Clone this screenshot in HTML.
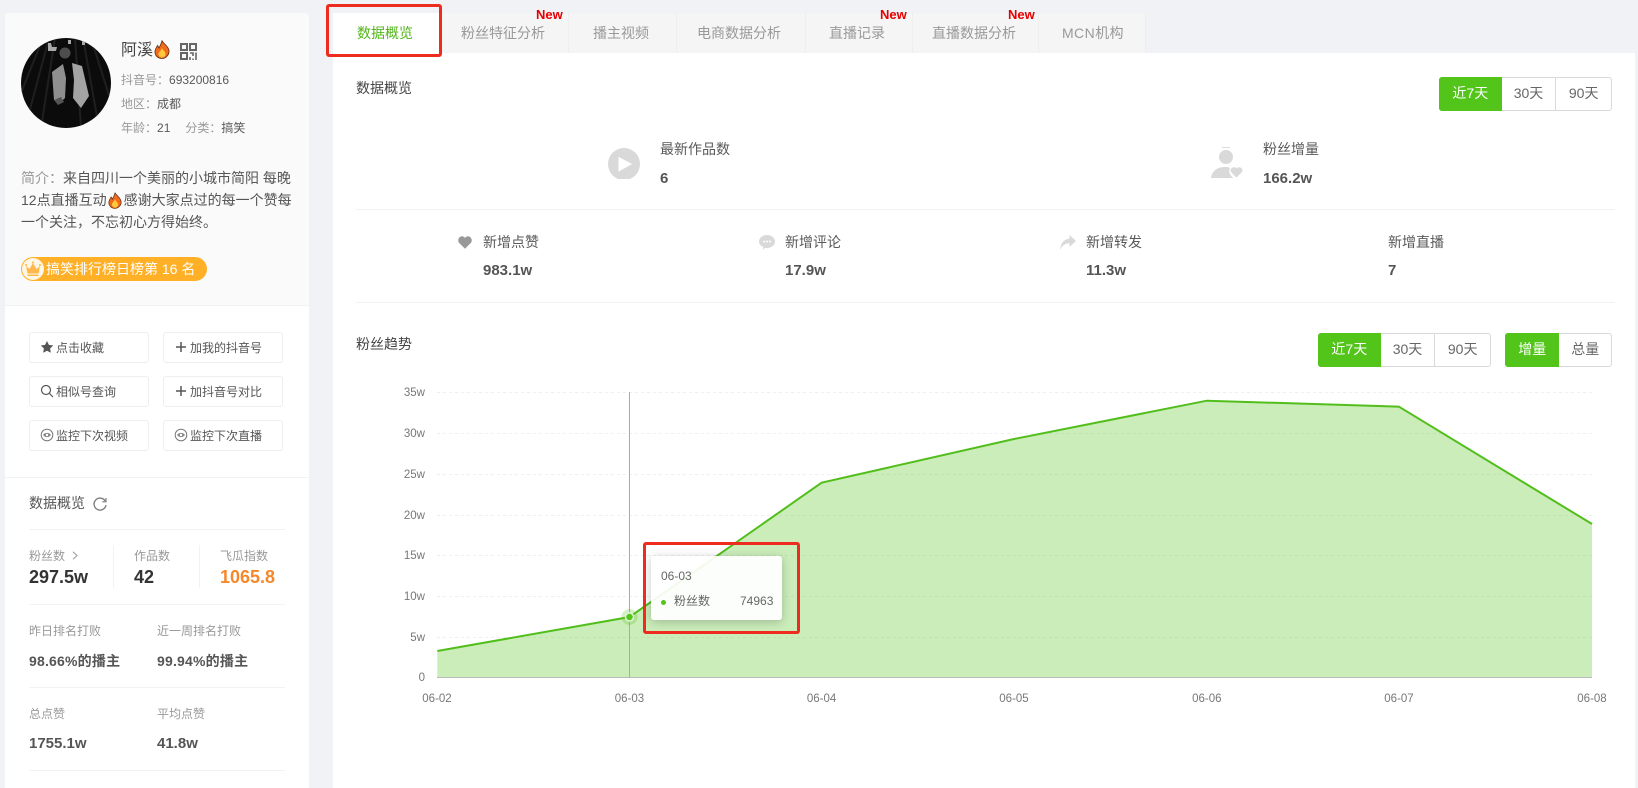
<!DOCTYPE html>
<html lang="zh-CN">
<head>
<meta charset="utf-8">
<title>数据概览</title>
<style>
*{box-sizing:border-box;margin:0;padding:0}
html,body{width:1638px;height:788px;overflow:hidden;background:#f0f2f5}
body{position:relative;font-family:"Liberation Sans","Noto Sans CJK SC",sans-serif;font-size:12px;color:#595959}
.a{position:absolute;white-space:nowrap;line-height:20px;height:20px}
.g{color:#999}.d{color:#444}
.t14{font-size:14px}
.b{font-weight:700}
.v{font-weight:700;font-size:15px;color:#555}
.line{position:absolute;height:1px;background:#f2f2f2}
.btn{position:absolute;width:120px;height:31px;background:#fff;border:1px solid #eee;border-radius:3px;font-size:12px;line-height:30px;color:#555;white-space:nowrap}
.btn svg{position:absolute;left:10px;top:7px}
.btn span{position:absolute;left:26px;top:0}
.tab{position:absolute;top:13px;height:40px;background:#f5f5f6;border-right:1px solid #eee}
.new{position:absolute;top:6px;font-weight:700;font-size:13px;color:#e60000;line-height:18px}
.grp{position:absolute;height:34px;display:flex;border:1px solid #d9d9d9;border-radius:3px;background:#fff;font-size:14px;line-height:31px;text-align:center;color:#666}
.grp div{border-left:1px solid #d9d9d9;height:32px}
.grp div.on{background:#52c41a;color:#fff;border-left:0;margin:-1px 0 -1px -1px;height:34px;line-height:33px;border-radius:3px 0 0 3px}
.grp div.on+div{border-left:0}
</style>
</head>
<body>

<!-- left card -->
<div style="position:absolute;left:5px;top:13px;width:304px;height:775px;background:#fff;border-radius:4px 4px 0 0"></div>
<div style="position:absolute;left:5px;top:13px;width:304px;height:293px;background:#fafafa;border-radius:4px 4px 0 0;border-bottom:1px solid #f2f2f2"></div>

<svg style="position:absolute;left:21px;top:38px" width="90" height="90" viewBox="0 0 90 90">
<defs><clipPath id="c"><circle cx="45" cy="45" r="45"/></clipPath></defs>
<g clip-path="url(#c)">
<rect width="90" height="90" fill="#0b0b0b"/>
<g fill="none" stroke="#1f1f1f" stroke-width="2">
<path d="M28 0L4 90M22 0L-6 70M34 0L20 90M62 0L78 90M70 0L92 70M54 0L60 90"/>
</g>
<path d="M27 5h3l1 4h5l-1 4h-8zM47 2h3v4h-3zM61 2h3v5h-3z" fill="#a8a8a8"/>
<circle cx="44" cy="15" r="5.500" fill="#4d4d4d"/>
<path d="M31 34l11-8 3 14-1 20-4 4-7-2z" fill="#8f8f8f"/>
<path d="M51 25l10 3 7 30-8 12-8-10 1-18z" fill="#a3a3a3"/>
<path d="M33 62l7-3 3 5-6 3z" fill="#555"/>
</g>
</svg>

<div class="a d" style="left:121px;top:41px;font-size:16px">阿溪</div>
<svg style="position:absolute;left:154px;top:40px" width="16" height="19" viewBox="0 0 16 19">
<path d="M8 .5c1 3 6 5 7 10 .5 4-3 8-7 8s-7.500-3-7-7.500c.3-2.500 2-4 2.500-5.500.8 1 1.200 1.800 1.500 2.500C6 6 7.500 3.500 8 .5z" fill="#f26b1d" stroke="#5a2a10" stroke-width=".8"/>
<path d="M8 8c.5 2 3.500 3.500 3.500 6 0 2-1.700 3.500-3.500 3.500S4.500 16 4.500 14c0-2 2.800-3.500 3.500-6z" fill="#ffc83d"/>
</svg>
<svg style="position:absolute;left:180px;top:43px" width="17" height="17" viewBox="0 0 17 17" fill="none" stroke="#666" stroke-width="2">
<rect x="1" y="1" width="6" height="6"/><rect x="10" y="1" width="6" height="6"/><rect x="1" y="10" width="6" height="6"/>
<path d="M10 10h3v3M16 9.500v7.500M10 14v3M13 15.500v1.500" stroke-width="1.600"/>
</svg>

<div class="a" style="left:121px;top:70px"><span class="g">抖音号：</span><span>693200816</span></div>
<div class="a" style="left:121px;top:94px"><span class="g">地区：</span><span>成都</span></div>
<div class="a" style="left:121px;top:118px"><span class="g">年龄：</span><span>21</span><span class="g" style="margin-left:15px">分类：</span><span>搞笑</span></div>

<div class="a t14" style="left:21px;top:168px;color:#555"><span class="g">简介：</span>来自四川一个美丽的小城市简阳 每晚</div>
<div class="a t14" style="left:21px;top:190px;color:#555">12点直播互动<span style="display:inline-block;width:17px"></span>感谢大家点过的每一个赞每</div>
<svg style="position:absolute;left:108px;top:192px" width="14" height="17" viewBox="0 0 16 19">
<path d="M8 .5c1 3 6 5 7 10 .5 4-3 8-7 8s-7.500-3-7-7.500c.3-2.500 2-4 2.500-5.500.8 1 1.200 1.800 1.500 2.500C6 6 7.500 3.500 8 .5z" fill="#f26b1d" stroke="#5a2a10" stroke-width=".8"/>
<path d="M8 8c.5 2 3.500 3.500 3.500 6 0 2-1.700 3.500-3.500 3.500S4.500 16 4.500 14c0-2 2.800-3.500 3.500-6z" fill="#ffc83d"/>
</svg>
<div class="a t14" style="left:21px;top:212px;color:#555">一个关注，不忘初心方得始终。</div>

<div style="position:absolute;left:21px;top:257px;width:186px;height:24px;border-radius:12px;background:#ffb026"></div>
<svg style="position:absolute;left:22px;top:258px" width="22" height="22" viewBox="0 0 22 22">
<circle cx="11" cy="11" r="11" fill="#fff7e6"/>
<path d="M4 8l3.500 3L11 5l3.500 6L18 8l-1.500 7.500h-11z" fill="#ffb84d"/>
<circle cx="4" cy="7" r="1" fill="#ffb84d"/><circle cx="11" cy="4.500" r="1" fill="#ffb84d"/><circle cx="18" cy="7" r="1" fill="#ffb84d"/>
<rect x="5.500" y="16.500" width="11" height="1.500" fill="#ffb84d"/>
</svg>
<div class="a t14" style="left:46px;top:259px;color:#fff">搞笑排行榜日榜第 16 名</div>

<!-- buttons -->
<div class="btn" style="left:29px;top:332px"><svg width="14" height="14" viewBox="0 0 14 14"><path d="M7 1l1.900 3.900 4.300.6-3.100 3 .7 4.300L7 10.800l-3.800 2 .7-4.300-3.100-3 4.300-.6z" fill="#555"/></svg><span style="left:26px">点击收藏</span></div>
<div class="btn" style="left:163px;top:332px"><svg width="14" height="14" viewBox="0 0 14 14"><path d="M7 2v10M2 7h10" stroke="#555" stroke-width="1.500"/></svg><span>加我的抖音号</span></div>
<div class="btn" style="left:29px;top:376px"><svg width="14" height="14" viewBox="0 0 14 14" fill="none" stroke="#555" stroke-width="1.200"><circle cx="6" cy="6" r="4.500"/><path d="M9.500 9.500L13 13"/></svg><span>相似号查询</span></div>
<div class="btn" style="left:163px;top:376px"><svg width="14" height="14" viewBox="0 0 14 14"><path d="M7 2v10M2 7h10" stroke="#555" stroke-width="1.500"/></svg><span>加抖音号对比</span></div>
<div class="btn" style="left:29px;top:420px"><svg width="14" height="14" viewBox="0 0 14 14" fill="none" stroke="#777"><circle cx="7" cy="7" r="5.800"/><path d="M3 7c2-2.800 6-2.800 8 0-2 2.800-6 2.800-8 0z" fill="#888" stroke="none"/><circle cx="7" cy="7" r="1.200" fill="#fff" stroke="none"/></svg><span>监控下次视频</span></div>
<div class="btn" style="left:163px;top:420px"><svg width="14" height="14" viewBox="0 0 14 14" fill="none" stroke="#777"><circle cx="7" cy="7" r="5.800"/><path d="M3 7c2-2.800 6-2.800 8 0-2 2.800-6 2.800-8 0z" fill="#888" stroke="none"/><circle cx="7" cy="7" r="1.200" fill="#fff" stroke="none"/></svg><span>监控下次直播</span></div>

<div class="line" style="left:5px;top:477px;width:304px"></div>

<div class="a" style="left:29px;top:493px;font-size:14px;color:#555">数据概览</div>
<svg style="position:absolute;left:93px;top:497px" width="14" height="14" viewBox="0 0 14 14" fill="none" stroke="#808080" stroke-width="1.400"><path d="M12.200 4A6 6 0 1 0 13 8"/><path d="M13 1v3.800H9.200" stroke-width="1.200"/></svg>
<div class="line" style="left:29px;top:529px;width:256px"></div>

<div class="a g" style="left:29px;top:546px">粉丝数</div>
<svg style="position:absolute;left:71px;top:551px" width="8" height="9" viewBox="0 0 8 9" fill="none" stroke="#999"><path d="M2 .8l4 3.700-4 3.700"/></svg>
<div class="a b" style="left:29px;top:567px;font-size:18px;color:#333">297.5w</div>
<div style="position:absolute;left:113px;top:545px;width:1px;height:43px;background:#f2f2f2"></div>
<div class="a g" style="left:134px;top:546px">作品数</div>
<div class="a b" style="left:134px;top:567px;font-size:18px;color:#333">42</div>
<div style="position:absolute;left:199px;top:545px;width:1px;height:43px;background:#f2f2f2"></div>
<div class="a g" style="left:220px;top:546px">飞瓜指数</div>
<div class="a b" style="left:220px;top:567px;font-size:18px;color:#f5882b">1065.8</div>
<div class="line" style="left:29px;top:604px;width:256px"></div>

<div class="a g" style="left:29px;top:621px">昨日排名打败</div>
<div class="a g" style="left:157px;top:621px">近一周排名打败</div>
<div class="a b" style="left:29px;top:651px;font-size:14px;letter-spacing:.2px;color:#555">98.66%的播主</div>
<div class="a b" style="left:157px;top:651px;font-size:14px;letter-spacing:.2px;color:#555">99.94%的播主</div>
<div class="line" style="left:29px;top:687px;width:256px"></div>

<div class="a g" style="left:29px;top:704px">总点赞</div>
<div class="a g" style="left:157px;top:704px">平均点赞</div>
<div class="a b" style="left:29px;top:734px;font-size:15px;color:#555">1755.1w</div>
<div class="a b" style="left:157px;top:734px;font-size:15px;color:#555">41.8w</div>
<div class="line" style="left:29px;top:770px;width:256px"></div>

<!-- tabs -->
<div class="tab" style="left:441px;width:128px"></div>
<div class="tab" style="left:569px;width:108px"></div>
<div class="tab" style="left:677px;width:129px"></div>
<div class="tab" style="left:806px;width:107px"></div>
<div class="tab" style="left:913px;width:126px"></div>
<div class="tab" style="left:1039px;width:107px"></div>

<!-- main panel -->
<div style="position:absolute;left:333px;top:53px;width:1302px;height:735px;background:#fff"></div>
<div style="position:absolute;left:333px;top:13px;width:108px;height:42px;background:#fff"></div>

<div class="a t14" style="left:357px;top:23px;color:#52b41a">数据概览</div>
<div class="a t14 g" style="left:461px;top:23px">粉丝特征分析</div>
<div class="a t14 g" style="left:593px;top:23px">播主视频</div>
<div class="a t14 g" style="left:697px;top:23px">电商数据分析</div>
<div class="a t14 g" style="left:829px;top:23px">直播记录</div>
<div class="a t14 g" style="left:932px;top:23px">直播数据分析</div>
<div class="a t14 g" style="left:1062px;top:23px;letter-spacing:.4px">MCN机构</div>
<div class="new" style="left:536px">New</div>
<div class="new" style="left:880px">New</div>
<div class="new" style="left:1008px">New</div>
<div style="position:absolute;left:326px;top:4px;width:116px;height:53px;border:3px solid #ee2b1f;border-radius:3px"></div>

<div class="a t14" style="left:356px;top:78px;color:#444">数据概览</div>

<div class="grp" style="left:1439px;top:77px;width:173px"><div class="on" style="width:63px">近7天</div><div style="width:54px">30天</div><div style="width:56px">90天</div></div>

<!-- stats row 1 -->
<svg style="position:absolute;left:608px;top:148px" width="32" height="31" viewBox="0 0 32 31"><circle cx="16" cy="16" r="16" fill="#d9d9d9"/><path d="M10.500 8.700L24 16l-13.500 7.700z" fill="#fff"/></svg>
<div class="a t14" style="left:660px;top:139px">最新作品数</div>
<div class="a v" style="left:660px;top:169px">6</div>

<svg style="position:absolute;left:1211px;top:147px" width="33" height="32" viewBox="0 0 33 32">
<path d="M11 .5h8" stroke="#ddd"/><circle cx="15" cy="10" r="7" fill="#d9d9d9"/>
<path d="M0 31c1-6 5-11 14-11 3 0 4 .3 5 1-1.500 3-1 6 3 10z" fill="#d9d9d9"/>
<path d="M25.500 30.500L20 25c-2-3.500 3-6.500 5.500-3.500 2.500-3 7.500 0 5.500 3.500z" fill="#d9d9d9"/>
</svg>
<div class="a t14" style="left:1263px;top:139px">粉丝增量</div>
<div class="a v" style="left:1263px;top:169px">166.2w</div>

<div class="line" style="left:356px;top:209px;width:1259px"></div>

<!-- stats row 2 -->
<svg style="position:absolute;left:458px;top:236px" width="14" height="13" viewBox="0 0 14 13"><path d="M7 12.800L1 6.800C-1 3.500 1.500.3 4 .3c1.300 0 2.300.6 3 1.700C7.700.9 8.700.3 10 .3c2.500 0 5 3.200 3 6.500z" fill="#999"/></svg>
<div class="a t14" style="left:483px;top:232px">新增点赞</div>
<div class="a v" style="left:483px;top:261px">983.1w</div>

<svg style="position:absolute;left:759px;top:235px" width="16" height="15" viewBox="0 0 16 15"><path d="M8 0c4.400 0 8 2.800 8 6.500S12.400 13 8 13c-.8 0-1.500-.1-2.200-.3L4 15v-3.200C1.600 10.700 0 8.800 0 6.500 0 2.800 3.600 0 8 0z" fill="#d9d9d9"/><circle cx="5" cy="6.500" r="1" fill="#fff"/><circle cx="8" cy="6.500" r="1" fill="#fff"/><circle cx="11" cy="6.500" r="1" fill="#fff"/></svg>
<div class="a t14" style="left:785px;top:232px">新增评论</div>
<div class="a v" style="left:785px;top:261px">17.9w</div>

<svg style="position:absolute;left:1060px;top:235px" width="16" height="15" viewBox="0 0 16 15"><path d="M9.500 0L16 6 9.500 12V8.300C5.500 8.300 2.500 10 0 15c.5-6 3.500-11 9.500-11.300z" fill="#d9d9d9"/></svg>
<div class="a t14" style="left:1086px;top:232px">新增转发</div>
<div class="a v" style="left:1086px;top:261px">11.3w</div>

<div class="a t14" style="left:1388px;top:232px">新增直播</div>
<div class="a v" style="left:1388px;top:261px">7</div>

<div class="line" style="left:356px;top:302px;width:1259px"></div>

<div class="a" style="left:356px;top:334px;font-size:14px;color:#444">粉丝趋势</div>
<div class="grp" style="left:1318px;top:333px;width:173px"><div class="on" style="width:63px">近7天</div><div style="width:54px">30天</div><div style="width:56px">90天</div></div>
<div class="grp" style="left:1505px;top:333px;width:107px"><div class="on" style="width:55px">增量</div><div style="width:52px">总量</div></div>

<!-- chart -->
<svg style="position:absolute;left:390px;top:380px" width="1230" height="330" viewBox="390 380 1230 330" font-family="Liberation Sans, Noto Sans CJK SC, sans-serif" font-size="11.500" fill="#777">
<g stroke="#efefef" stroke-dasharray="3 3">
<path d="M437 392.500H1592M437 433.500H1592M437 474.500H1592M437 515.500H1592M437 555.500H1592M437 596.500H1592M437 637.500H1592"/>
</g>
<path d="M437.300 651L629.500 617 821.600 482.700 1014 439 1206.800 400.700 1399 406.700 1592 524V677.500H437.300z" fill="#52c41a" fill-opacity=".3"/>
<path d="M437.300 651L629.500 617 821.600 482.700 1014 439 1206.800 400.700 1399 406.700 1592 524" fill="none" stroke="#52be1c" stroke-width="2"/>
<path d="M437 677.500H1592" stroke="#bbb"/>
<path d="M629.500 392V677" stroke="#aaa"/>
<circle cx="629.500" cy="617" r="8" fill="#52c41a" fill-opacity=".25"/>
<circle cx="629.500" cy="617" r="4" fill="#52c41a" stroke="#dff5d0" stroke-width="1.500"/>
<g text-anchor="end">
<text x="425" y="396">35w</text><text x="425" y="437">30w</text><text x="425" y="478">25w</text><text x="425" y="519">20w</text><text x="425" y="559">15w</text><text x="425" y="600">10w</text><text x="425" y="641">5w</text><text x="425" y="681">0</text>
</g>
<g text-anchor="middle">
<text x="437" y="702">06-02</text><text x="629.500" y="702">06-03</text><text x="821.600" y="702">06-04</text><text x="1014" y="702">06-05</text><text x="1206.800" y="702">06-06</text><text x="1399" y="702">06-07</text><text x="1592" y="702">06-08</text>
</g>
</svg>

<!-- tooltip -->
<div style="position:absolute;left:651px;top:556px;width:131px;height:64px;background:rgba(255,255,255,.92);border-radius:3px;box-shadow:0 2px 10px rgba(0,0,0,.22)"></div>
<div class="a" style="left:661px;top:566px;color:#666">06-03</div>
<div style="position:absolute;left:661px;top:600px;width:5px;height:5px;border-radius:50%;background:#52c41a"></div>
<div class="a" style="left:674px;top:591px;color:#666">粉丝数</div>
<div class="a" style="left:740px;top:591px;width:32px;text-align:right;color:#666">74963</div>
<div style="position:absolute;left:643px;top:542px;width:157px;height:92px;border:3px solid #ee2b1f;border-radius:3px"></div>

</body>
</html>
